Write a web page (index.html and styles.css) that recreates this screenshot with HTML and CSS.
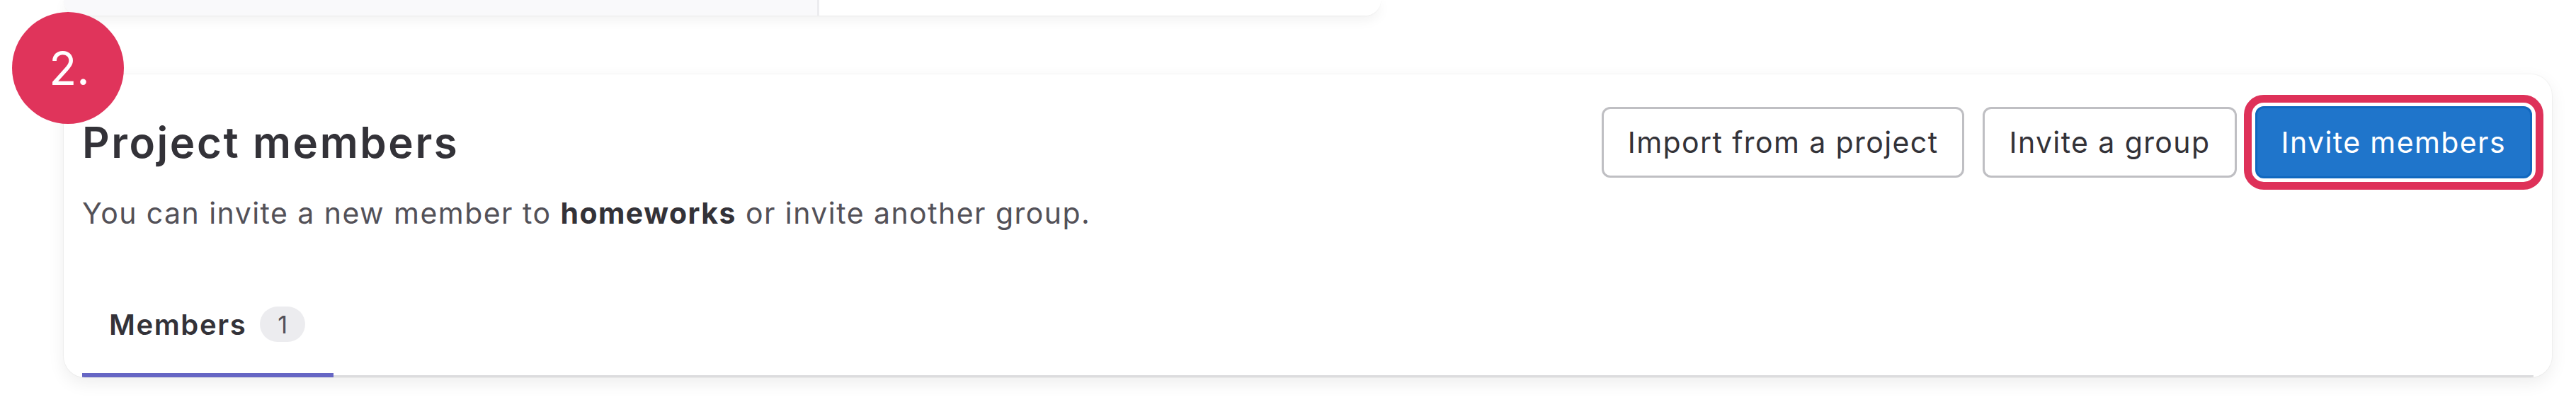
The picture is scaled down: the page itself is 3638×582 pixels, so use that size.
FILE: index.html
```html
<!DOCTYPE html>
<html lang="en">
<head>
<meta charset="utf-8">
<title>Project members</title>
<link rel="stylesheet" href="styles.css">
</head>
<body>
<div class="page">
  <div class="top-card">
    <div class="top-left"></div>
    <div class="top-right"></div>
  </div>

  <section class="card">
    <div class="header">
      <h1 class="title">Project members</h1>
      <div class="actions">
        <button class="btn">Import from a project</button>
        <button class="btn">Invite a group</button>
        <button class="btn btn-primary">Invite members</button>
      </div>
    </div>
    <p class="desc">You can invite a new member to <strong>homeworks</strong> or invite another group.</p>
    <nav class="tabs">
      <a class="tab active">Members <span class="count">1</span></a>
    </nav>
  </section>

  <div class="step">2.</div>
</div>
</body>
</html>
```

FILE: styles.css
```css
* { box-sizing: border-box; }
html, body { margin: 0; padding: 0; background: #ffffff; }
body {
  font-family: "Inter", "Noto Sans", "Liberation Sans", sans-serif;
  color: #333238;
  width: 3638px;
  height: 582px;
  overflow: hidden;
}
.page {
  position: relative;
  padding: 0 34px 0 90px;
}
.top-card {
  display: flex;
  width: 1860px;
  height: 22px;
  border-radius: 0 0 30px 30px;
  overflow: hidden;
  box-shadow: 0 6px 18px rgba(0, 0, 0, 0.06), 0 1px 2px rgba(0, 0, 0, 0.04);
}
.top-left {
  width: 1067px;
  background: #f9f9fb;
  border-right: 3px solid #ececef;
}
.top-right { flex: 1; background: #fff; }

.card {
  margin-top: 83px;
  width: 3514px;
  background: #fff;
  border-radius: 30px;
  overflow: hidden;
  padding: 45px 26px 0 26px;
  box-shadow: 0 0 0 1px rgba(0, 0, 0, 0.035), 0 8px 24px rgba(0, 0, 0, 0.07);
}
.header {
  display: flex;
  align-items: center;
  justify-content: space-between;
}
.title {
  margin: 0;
  font-size: 60px;
  line-height: 71px;
  font-weight: 600;
  color: #333238;
  letter-spacing: 2.6px;
}
.actions {
  display: flex;
  align-items: center;
  gap: 26px;
}
.btn {
  height: 100px;
  padding: 0 34px;
  font-family: inherit;
  font-size: 41px;
  font-weight: 400;
  letter-spacing: 1.4px;
  color: #333238;
  background: #fff;
  border: 3px solid #bfbfc3;
  border-radius: 12px;
}
.btn-primary {
  height: 102px;
  background: #1f75cb;
  border-color: #1068bf;
  color: #fff;
  outline: 11px solid #de3159;
  outline-offset: 5px;
  margin-right: 2px;
}
.desc {
  margin: 19px 0 0 0;
  font-size: 41px;
  line-height: 61px;
  letter-spacing: 1.45px;
  color: #535158;
}
.desc strong { color: #333238; font-weight: 700; }

.tabs {
  margin-top: 51px;
  display: flex;
  box-shadow: inset 0 -3px 0 #dcdcde;
}
.tab {
  display: flex;
  align-items: center;
  gap: 19px;
  height: 150px;
  padding: 0 40px 0 38px;
  font-size: 40px;
  font-weight: 600;
  letter-spacing: 1.6px;
  color: #333238;
}
.tab.active { box-shadow: inset 0 -6px 0 #6666c4; }
.count {
  display: inline-flex;
  align-items: center;
  justify-content: center;
  width: 64px;
  height: 50px;
  border-radius: 25px;
  background: #ececef;
  color: #535158;
  font-size: 34px;
  font-weight: 400;
  letter-spacing: 0;
}

.step {
  position: absolute;
  left: 17px;
  top: 17px;
  width: 158px;
  height: 158px;
  border-radius: 50%;
  background: #e0345b;
  color: #fff;
  display: flex;
  align-items: center;
  justify-content: center;
  font-size: 64px;
  font-weight: 400;
  padding-left: 4px;
}
```
